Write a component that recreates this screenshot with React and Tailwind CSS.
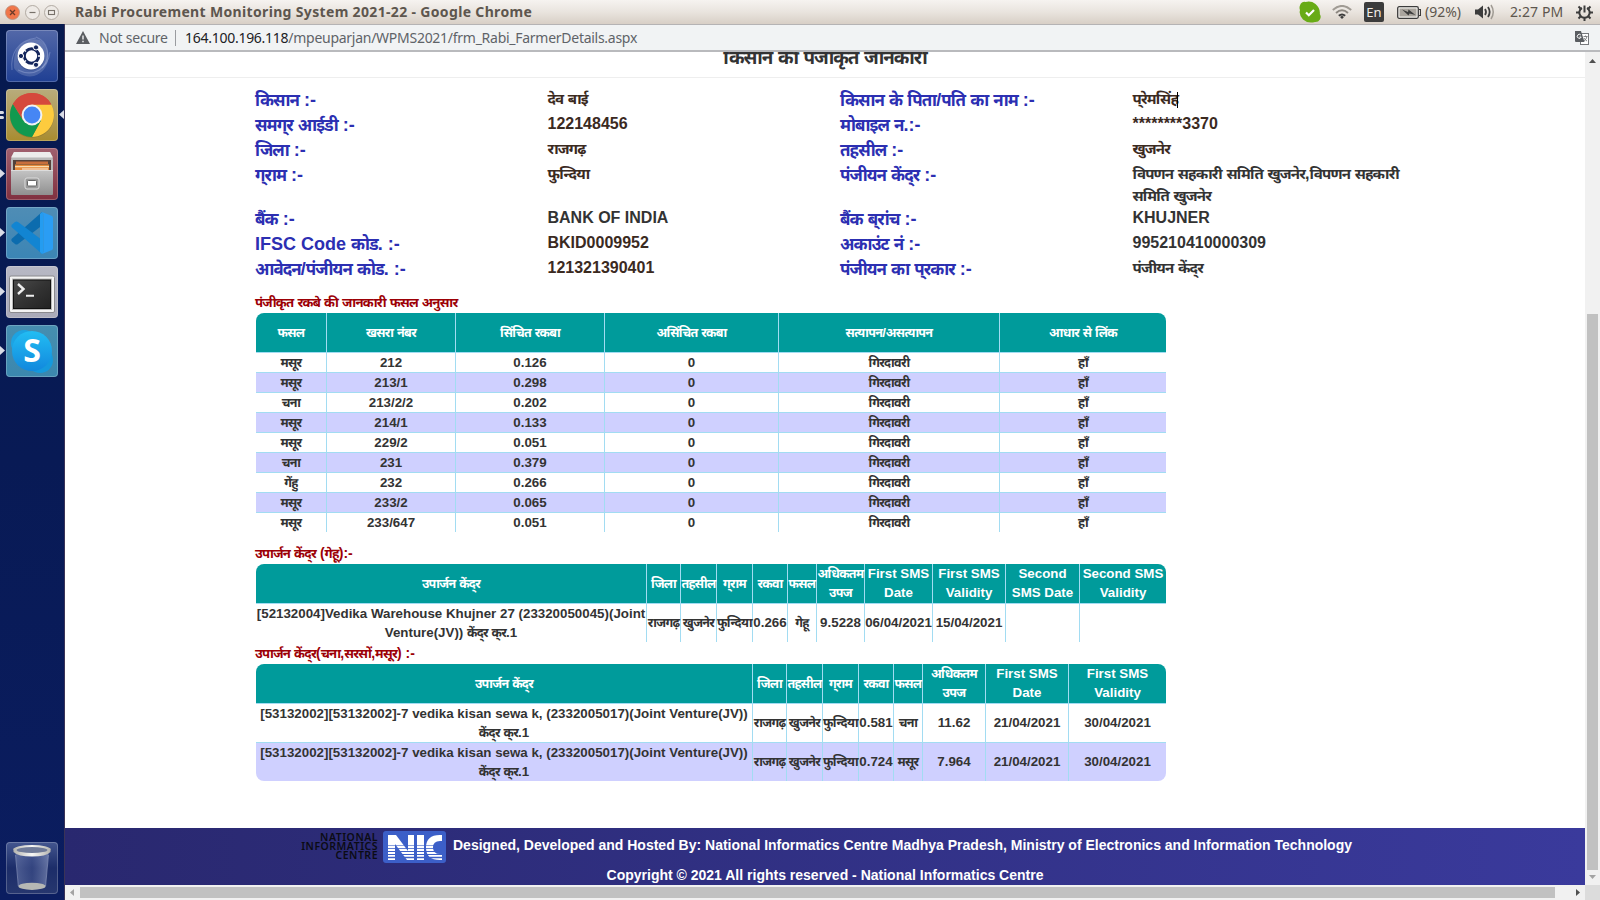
import React from "react";

const FONT = "font-['Liberation_Sans','Noto_Sans_Devanagari',sans-serif]";
const UI = "font-['Noto_Sans','Open_Sans',sans-serif]";

// Sets Devanagari words slightly tighter than the Latin text and keeps the halant of "-ra" clusters visible.
function Mix({ children }) {
  const parts = String(children).split(/([\u0900-\u097F]+)/);
  return parts.map((p, i) =>
    i % 2 ? (
      <span key={i} className="text-[0.94em] leading-[0] tracking-[-0.055em]">{p.replace(/\u094D\u0930/g, "\u094D\u200C\u0930")}</span>
    ) : (
      p
    )
  );
}

function Tile({ className, children, left, right }) {
  return (
    <div className="relative w-full h-[52px] pl-[6px]">
      <div className={"relative w-[52px] h-[52px] rounded-[4px] overflow-hidden shadow-[inset_0_0_0_1px_rgba(255,255,255,0.22)] " + className}>
        {children}
      </div>
      {left === 1 && <Pip />}
      {left === 2 && (
        <div className="absolute left-0 top-[22px] flex flex-col gap-[2px]">
          <i className="w-[4px] h-[3px] bg-[#d9dce6] rounded-r-[2px]" />
          <i className="w-[4px] h-[3px] bg-[#d9dce6] rounded-r-[2px]" />
        </div>
      )}
      {right && (
        <svg className="absolute right-0 top-[21px] w-[5px] h-[9px]" viewBox="0 0 5 9"><path d="M5 0V9L0 4.5Z" fill="#d9dce6" /></svg>
      )}
    </div>
  );
}

function Pip() {
  return <svg className="absolute left-0 top-[21px] w-[5px] h-[9px]" viewBox="0 0 5 9"><path d="M0 0V9L5 4.5Z" fill="#d9dce6" /></svg>;
}

function Dash() {
  return (
    <svg viewBox="0 0 52 52" className="w-full h-full">
      <g fill="none" stroke="#b9c8ef" strokeOpacity=".3" strokeWidth="1.2">
        <path d="M6 40C4 24 12 10 30 8" /><path d="M30 7C42 12 46 26 36 38" /><path d="M44 22C42 38 28 48 12 40" />
      </g>
      <path d="M8 38C6 18 18 6 34 10C46 18 46 40 28 46C18 48 10 42 8 38Z" fill="#fff" opacity=".16" />
      <circle cx="25" cy="27" r="13.6" fill="#0d2560" opacity=".3" />
      <circle cx="25" cy="26" r="13.4" fill="#fff" />
      <circle cx="25.5" cy="26" r="7.2" fill="none" stroke="#14265c" strokeWidth="3" />
      <path d="M20 21.5L17.5 19.5M20 30.5L17.5 32.5M32 26H35" stroke="#fff" strokeWidth="1.4" />
      <g fill="#14265c" stroke="#fff" strokeWidth="1"><circle cx="15" cy="26" r="2.6" /><circle cx="30" cy="17.4" r="2.6" /><circle cx="30" cy="34.8" r="2.6" /></g>
    </svg>
  );
}

function Chrome() {
  return (
    <svg viewBox="0 0 52 52" className="w-full h-full">
      <circle cx="26" cy="26.5" r="22.2" fill="#6b5a20" opacity=".35" />
      <path d="M26 26L6.95 15A22 22 0 0 1 45.05 15Z" fill="#d5493c" />
      <path d="M26 15.5H45.3A22 22 0 0 1 26 48L35.1 31.2Z" fill="#fdcb3e" />
      <path d="M6.95 15A22 22 0 0 0 26 48L35 31.5L17 31.2Z" fill="#11994f" />
      <path d="M6.95 15A22 22 0 0 1 45.3 15.5H26A10.6 10.6 0 0 0 16.5 30Z" fill="#d5493c" />
      <circle cx="26" cy="26" r="10.4" fill="#f2f2f2" />
      <circle cx="26" cy="26" r="8.4" fill="#4686f4" />
    </svg>
  );
}

function Files() {
  return (
    <svg viewBox="0 0 52 52" className="w-full h-full">
      <defs>
        <linearGradient id="fd" x1="0" y1="0" x2="0" y2="1"><stop offset="0" stopColor="#c4c4c4" /><stop offset="1" stopColor="#909090" /></linearGradient>
      </defs>
      <path d="M8 4H44L47 11V45H5V11Z" fill="#b9b9b9" />
      <path d="M8 4H44L47 9.500H5Z" fill="#ececec" />
      <path d="M7 12H45V23H7Z" fill="#54413a" />
      <path d="M10 13.500H42V16H10Z" fill="#c96f3c" />
      <path d="M9 16.500H43V23H9Z" fill="#e58a3b" /><path d="M9 18H43V19.200H9Z" fill="#f9dcae" />
      <path d="M16 20H42V22H16Z" fill="#fff" opacity=".45" />
      <path d="M5 22H47V46Q47 47 46 47H6Q5 47 5 46Z" fill="url(#fd)" />
      <path d="M5 22H47V22.800H5Z" fill="#e4e4e4" />
      <rect x="19" y="30" width="14" height="11" rx="2" fill="#999" stroke="#ddd" strokeWidth="1" />
      <rect x="21.500" y="32.500" width="9" height="5.500" rx="1" fill="#fff" stroke="#666" strokeWidth="1" />
    </svg>
  );
}

function Code() {
  return (
    <svg viewBox="0 0 52 52" className="w-full h-full">
      <path d="M36 5L5.500 32Q5 33.500 6 34.500L9 37Q10.500 38 12 37L36 18.500Z" fill="#0c6cae" />
      <path d="M36 47L5.500 20Q5 18.500 6 17.500L9 15Q10.500 14 12 15L36 33Z" fill="#1285d2" />
      <path d="M36 5L46 9Q47 9.600 47 11V41Q47 42.300 46 43L36 47Q38 45 37.500 42V10Q38 7 36 5Z" fill="#2a9df4" />
      <path d="M36 5L34 7V45L36 47Q38 45 37.500 42V10Q38 7 36 5Z" fill="#249cf0" />
    </svg>
  );
}

function Term() {
  return (
    <svg viewBox="0 0 52 52" className="w-full h-full">
      <defs><linearGradient id="tm" x1="0" y1="0" x2="1" y2="1"><stop offset="0" stopColor="#4a4a4a" /><stop offset=".5" stopColor="#333" /><stop offset="1" stopColor="#222" /></linearGradient></defs>
      <rect x="3.500" y="10" width="45" height="36.500" rx="1.500" fill="#f3f3f3" stroke="#8a8a8e" />
      <rect x="6" y="12.500" width="40" height="31.500" fill="#b9b9b9" />
      <rect x="7.500" y="14" width="37" height="28.500" fill="url(#tm)" stroke="#111" />
      <path d="M12 18L17.500 23L12 28" fill="none" stroke="#eee" strokeWidth="2.400" />
      <path d="M20 29.800H28" stroke="#eee" strokeWidth="2" />
    </svg>
  );
}

function Skype() {
  return (
    <svg viewBox="0 0 52 52" className="w-full h-full">
      <defs><linearGradient id="sk" x1="0" y1="0" x2="0" y2="1"><stop offset="0" stopColor="#22bdf3" /><stop offset="1" stopColor="#1288dd" /></linearGradient></defs>
      <circle cx="18" cy="18" r="13" fill="#1da3e2" /><circle cx="34" cy="35" r="13" fill="#1599dd" />
      <circle cx="26" cy="26" r="20" fill="url(#sk)" />
      <text x="26" y="37" textAnchor="middle" fontSize="32" fontWeight="700" fill="#fff" fontFamily="Open Sans, sans-serif">S</text>
    </svg>
  );
}

function Trash() {
  return (
    <svg viewBox="0 0 52 52" className="w-full h-full">
      <defs>
        <linearGradient id="tr" x1="0" y1="0" x2="1" y2="0"><stop offset="0" stopColor="#8a98c4" stopOpacity=".45" /><stop offset=".5" stopColor="#5b6ca6" stopOpacity=".35" /><stop offset="1" stopColor="#a8b4d6" stopOpacity=".5" /></linearGradient>
        <linearGradient id="rm" x1="0" y1="0" x2="1" y2="0"><stop offset="0" stopColor="#b5b5b0" /><stop offset=".5" stopColor="#f7f7f5" /><stop offset="1" stopColor="#b5b5b0" /></linearGradient>
      </defs>
      <path d="M9.500 11L12.500 44Q26 50 39.500 44L42.500 11Z" fill="url(#tr)" />
      <ellipse cx="26" cy="44.300" rx="13.600" ry="3.600" fill="#b6b8b4" />
      <path d="M9.500 13L12.300 44M42.500 13L39.600 44" stroke="#9aa5c8" strokeWidth=".8" opacity=".7" />
      <path d="M7.500 6.500V10Q12 14.500 26 14.500Q40 14.500 44.500 10V6.500Z" fill="url(#rm)" />
      <ellipse cx="26" cy="7.500" rx="18.500" ry="4.500" fill="url(#rm)" />
      <ellipse cx="26" cy="8" rx="15.500" ry="3" fill="#6f7a98" />
    </svg>
  );
}

function TitleBar() {
  return (
    <header className={"h-[24px] w-full shrink-0 flex items-center bg-linear-to-b from-[#f6f3f0] via-[#e9e4de] to-[#d8cfc6] pl-[5px] pr-[7px] " + UI}>
      <div className="flex gap-[3px] items-center w-[66px]">
        <svg className="w-[15px] h-[15px]" viewBox="0 0 15 15"><circle cx="7.500" cy="7.500" r="7" fill="#f0764a" stroke="#b9917f" strokeWidth=".8" /><path d="M5 5L10 10M10 5L5 10" stroke="#6b3a28" strokeWidth="1.300" /></svg>
        <svg className="w-[15px] h-[15px] ml-[2px]" viewBox="0 0 15 15"><circle cx="7.500" cy="7.500" r="7" fill="#eeeae6" stroke="#aaa39b" strokeWidth=".9" /><path d="M4.500 7.500H10.500" stroke="#77716a" strokeWidth="1.200" /></svg>
        <svg className="w-[15px] h-[15px] ml-[1px]" viewBox="0 0 15 15"><circle cx="7.500" cy="7.500" r="7" fill="#eeeae6" stroke="#aaa39b" strokeWidth=".9" /><rect x="4.500" y="5.500" width="6" height="4" fill="none" stroke="#77716a" strokeWidth="1.100" /></svg>
      </div>
      <div className="pl-[4px] whitespace-nowrap text-[14px] leading-[24px] font-bold text-[#5d564e] tracking-[0.34px]">Rabi Procurement Monitoring System 2021-22 - Google Chrome</div>
      <div className="flex-1" />
      <svg className="w-[22px] h-[22px]" viewBox="0 0 22 22"><path d="M1 4.500A4.500 4.500 0 0 1 6.500 1Q12-.5 16.500 3Q21.500 7.500 20.800 13A5.200 5.200 0 0 1 16 21Q9 23 4 18.500Q-.5 13.500 1 9Q0 6.500 1 4.500Z" fill="#68ab16" /><path d="M7 11.500L9.800 14.200L15 9" fill="none" stroke="#fff" strokeWidth="2.200" /></svg>
      <svg className="w-[20px] h-[14px] ml-[11px]" viewBox="0 0 20 14" fill="none" strokeWidth="1.900"><path d="M.8 5Q10-3.200 19.200 5" stroke="#a09b94" /><path d="M4 8Q10 2.700 16 8" stroke="#8c8780" /><path d="M6.800 10.800Q10 8 13.200 10.800" stroke="#3c3c3c" /><path d="M8 12L10 10.800L12 12L10 14Z" fill="#3c3c3c" /></svg>
      <div className="ml-[12px] w-[20px] h-[20px] rounded-[2px] bg-[#3c3c3c] text-[#f2eee9] text-[13px] leading-[20px] text-center">En</div>
      <svg className="ml-[13px] w-[24px] h-[13px]" viewBox="0 0 24 13"><rect x=".7" y=".7" width="20.600" height="11.600" rx="1.500" fill="#f5f2ee" stroke="#3c3c3c" strokeWidth="1.300" /><rect x="2.500" y="2.500" width="17" height="8" fill="#aaa59e" /><path d="M22 3.500H23.500V9.500H22" fill="none" stroke="#3c3c3c" strokeWidth="1.200" /><path d="M5 3.500L11 6L11.500 3.500L18.500 9L12.500 7.500L11.500 9.500Z" fill="#3c3c3c" /></svg>
      <div className="ml-[4px] w-[38px] text-[14px] leading-[24px] text-[#5d564e] tracking-[0px] whitespace-nowrap">(92%)</div>
      <svg className="ml-[12px] w-[20px] h-[16px]" viewBox="0 0 20 16" fill="none"><path d="M0 5.500H3L8 1.500V14.500L3 10.500H0Z" fill="#3c3c3c" /><path d="M10 5Q12 8 10 11" stroke="#3c3c3c" strokeWidth="1.800" /><path d="M13 3Q16.300 8 13 13" stroke="#3c3c3c" strokeWidth="1.800" /><path d="M16 1Q20.500 8 16 15" stroke="#a09b94" strokeWidth="1.500" /></svg>
      <div className="ml-[15px] w-[54px] text-[14px] leading-[24px] text-[#5d564e] tracking-[0.1px] whitespace-nowrap">2:27 PM</div>
      <svg className="ml-[12px] w-[17px] h-[17px]" viewBox="0 0 17 17" fill="none" stroke="#3c3c3c"><path d="M6 4A5.200 5.200 0 1 0 11 4" strokeWidth="2" /><path d="M8.500 1.500V8.500" strokeWidth="2" /><path d="M0 8.500H3M14 8.500H17M2.500 2.500L4.500 4.500M14.500 2.500L12.500 4.500M2.500 14.500L4.500 12.500M14.500 14.500L12.500 12.500M8.500 14V17" strokeWidth="2" /></svg>
    </header>
  );
}

function AddressBar() {
  return (
    <div className={"h-[28px] shrink-0 flex items-center border-t border-b-2 border-t-[#b5b3b4] border-b-[#b9babd] bg-[#f1f3f4] pl-[11px] pr-[11px] text-[14px] text-[#5f6368] whitespace-nowrap " + UI}>
      <svg className="w-[14px] h-[13px]" viewBox="0 0 14 13"><path d="M7 0L14 13H0Z" fill="#5a5d61" /><path d="M6.300 4.500H7.700V8.500H6.300ZM6.300 9.800H7.700V11.200H6.300Z" fill="#f1f3f4" /></svg>
      <span className="ml-[9px] w-[76px] tracking-[-0.25px]">Not secure</span>
      <i className="w-px h-[16px] bg-[#9a9ca0]" />
      <span className="ml-[9px] tracking-[-0.27px]"><span className="text-[#202124]">164.100.196.118</span>/mpeuparjan/WPMS2021/frm_Rabi_FarmerDetails.aspx</span>
      <i className="flex-1" />
      <svg className="w-[14px] h-[14px]" viewBox="0 0 14 14"><rect x="5.500" y="2.500" width="8" height="11" fill="#fff" stroke="#77797c" /><path d="M0 0H6L9.500 11H1Q0 11 0 10Z" fill="#5a5d61" /><path d="M5.800 4A2 2 0 1 0 6.200 6H4.500" fill="none" stroke="#fff" /><path d="M8.500 5.500H12.500M10.500 4.500V5.500M12 5.500Q11.500 8.500 8.800 10M9 7Q10 9 12 10" fill="none" stroke="#77797c" strokeWidth=".9" /></svg>
    </div>
  );
}

const DETAILS = [
  ["किसान :-", "देव बाई", "किसान के पिता/पति का नाम :-", "प्रेमसिंह"],
  ["समग्र आईडी :-", "122148456", "मोबाइल न.:-", "********3370"],
  ["जिला :-", "राजगढ़", "तहसील :-", "खुजनेर"],
  ["ग्राम :-", "फुन्दिया", "पंजीयन केंद्र :-", "विपणन सहकारी समिति खुजनेर,विपणन सहकारी समिति खुजनेर"],
  ["बैंक :-", "BANK OF INDIA", "बैंक ब्रांच :-", "KHUJNER"],
  ["IFSC Code कोड. :-", "BKID0009952", "अकाउंट नं :-", "995210410000309"],
  ["आवेदन/पंजीयन कोड. :-", "121321390401", "पंजीयन का प्रकार :-", "पंजीयन केंद्र"],
];

function Details() {
  return (
    <div className="ml-[190px] mt-[10px] w-[1170px] grid grid-cols-4 grid-rows-[25px_25px_25px_44px_25px_25px_25px] font-bold">
      {DETAILS.map((row, r) =>
        row.map((t, c) =>
          c % 2 === 0 ? (
            <div key={r + "-" + c} className="text-[18px] leading-[25px] text-[#2c2fb2] whitespace-nowrap"><Mix>{t}</Mix></div>
          ) : (
            <div key={r + "-" + c} className={"text-[16px] leading-[22px] pr-[15px] " + (r < 3 || (r > 4 && c === 1) || (r === 3 && c === 1) ? "text-[#3b2a1f]" : "text-[#333]")}>
              <Mix>{t}</Mix>
              {r === 0 && c === 3 && <i className="inline-block w-px h-[16px] bg-black align-middle -ml-px" />}
            </div>
          )
        )
      )}
    </div>
  );
}

function Table({ cols, head, rows, rowH, tall, rounded }) {
  return (
    <table className={"ml-[191px] w-[910px] table-fixed border-separate border-spacing-0 overflow-hidden rounded-t-[8px] text-center font-bold text-[13.33px] leading-[19px] text-[#333] " + (rounded ? "rounded-b-[8px]" : "")}>
      <colgroup>{cols.map((w, i) => <col key={i} style={{ width: w }} />)}</colgroup>
      <thead>
        <tr className="h-[39px] bg-[#009b9b] text-white">
          {head.map((h, i) => (
            <th key={i} className={"px-0 pt-0 align-middle whitespace-pre " + (h.includes("\n") ? "pb-px " : "pb-0 ") + (i ? "border-l border-[#a2dcf2]" : "")}><Mix>{h}</Mix></th>
          ))}
        </tr>
      </thead>
      <tbody>
        {rows.map((row, r) => (
          <tr key={r} className={rowH + (r % 2 ? " bg-[#cfd0ff]" : " bg-white")}>
            {row.map((c, i) => (
              <td key={i} className={"px-0 pt-0 align-middle whitespace-pre border-t border-[#a2dcf2] " + (i ? "border-l " : "") + (tall && i ? "pb-px" : "pb-0")}><Mix>{c}</Mix></td>
            ))}
          </tr>
        ))}
      </tbody>
    </table>
  );
}

const CROPS = [
  ["मसूर", "212", "0.126"], ["मसूर", "213/1", "0.298"], ["चना", "213/2/2", "0.202"], ["मसूर", "214/1", "0.133"],
  ["मसूर", "229/2", "0.051"], ["चना", "231", "0.379"], ["गेंहु", "232", "0.266"], ["मसूर", "233/2", "0.065"], ["मसूर", "233/647", "0.051"],
].map((r) => [...r, "0", "गिरदावरी", "हाँ"]);

const JV = "[53132002][53132002]-7 vedika kisan sewa k, (2332005017)(Joint Venture(JV))\nकेंद्र क्र.1";

function Caption({ className, children }) {
  return <div className={"ml-[190px] text-[14px] font-bold text-[#9c0006] whitespace-nowrap " + className}><Mix>{children}</Mix></div>;
}

function Footer() {
  return (
    <footer className="mt-auto h-[57px] w-full shrink-0 bg-linear-to-r from-[#29286f] to-[#3a3a9c] text-white font-bold text-[14px] whitespace-nowrap">
      <div className="h-[35px] flex items-start pl-[236px]">
        <div className={"w-[77px] mt-[5px] text-right text-[10.5px] leading-[9px] font-semibold text-[#0b0b14] tracking-[0.5px] " + UI}>
          NATIONAL<br />INFORMATICS<br />CENTRE
        </div>
        <svg className="ml-[5px] mt-[3px] w-[63px] h-[32px]" viewBox="0 0 63 32">
          <rect width="63" height="32" rx="3" fill="#3c5fc8" />
          <path d="M5 4H13L25 20V4H31V29H24L12 13V29H5Z M34 4H41V29H34Z M59 4V10Q50 9 50 16.500Q50 24 59 23V29Q43 30 43 16.500Q43 3 59 4Z" fill="#fff" />
          <g stroke="#3c5fc8"><path d="M5 14.500H59" strokeWidth=".6" /><path d="M5 17.500H59" strokeWidth=".8" /><path d="M5 20.500H59" strokeWidth="1" /><path d="M5 23.500H59" strokeWidth="1.200" /><path d="M5 26.500H59" strokeWidth="1.500" /></g>
        </svg>
        <div className="ml-[7px] leading-[35px]">Designed, Developed and Hosted By: National Informatics Centre Madhya Pradesh, Ministry of Electronics and Information Technology</div>
      </div>
      <div className="w-full text-center leading-[24px]">Copyright © 2021 All rights reserved - National Informatics Centre</div>
    </footer>
  );
}

export default function App() {
  return (
    <div className={"w-[1600px] h-[900px] overflow-hidden flex flex-col bg-white " + FONT}>
      <TitleBar />
      <div className="flex h-[876px]">
        <aside className="w-[65px] shrink-0 flex flex-col gap-[7px] pt-[6px] pb-[6px] border-r border-[#3a3357] bg-linear-to-b from-[#061a4f] via-[#081a55] to-[#0b1d60]">
          <Tile className="bg-linear-to-b from-[#5368a8] to-[#1f3f93]"><Dash /></Tile>
          <Tile left={2} right className="bg-linear-to-b from-[#b8ac7c] to-[#a88c2e]"><Chrome /></Tile>
          <Tile left={1} className="bg-linear-to-b from-[#a0606f] to-[#80303f]"><Files /></Tile>
          <Tile left={1} className="bg-linear-to-b from-[#4f8db5] to-[#3b85b5]"><Code /></Tile>
          <Tile left={1} className="bg-linear-to-b from-[#b7b8c4] to-[#a9aab8]"><Term /></Tile>
          <Tile left={1} className="bg-linear-to-b from-[#468eb0] to-[#3b87ae]"><Skype /></Tile>
          <div className="flex-1" />
          <Tile className="bg-linear-to-b from-[#44568f] via-[#1c2d69] to-[#27376f]"><Trash /></Tile>
        </aside>
        <div className="flex-1 flex flex-col min-w-0">
          <AddressBar />
          <div className="flex h-[833px]">
            <main className="w-[1520px] flex flex-col overflow-hidden text-[#333]">
              <div className="h-[26px] shrink-0 border-b border-[#eee] overflow-hidden flex flex-col items-center">
                <h1 className="-mt-[9px] text-[20px] leading-[28px] font-bold whitespace-nowrap"><Mix>किसान की पंजीकृत जानकारी</Mix></h1>
              </div>
              <Details />
              <Caption className="mt-[10px] h-[21px] leading-[20px]">पंजीकृत रकबे की जानकारी फसल अनुसार</Caption>
              <Table cols={[70, 129, 149, 174, 221, 167]} rowH="h-[20px]" head={["फसल", "खसरा नंबर", "सिंचित रकबा", "असिंचित रकबा", "सत्यापन/असत्यापन", "आधार से लिंक"]} rows={CROPS} />
              <Caption className="mt-[11px] h-[21px] leading-[20px]">उपार्जन केंद्र (गेहू):-</Caption>
              <Table
                tall
                cols={[390, 34, 36, 36, 35, 29, 48, 68, 73, 74, 87]}
                rowH="h-[39px]"
                head={["उपार्जन केंद्र", "जिला", "तहसील", "ग्राम", "रकवा", "फसल", "अधिकतम\nउपज", "First SMS\nDate", "First SMS\nValidity", "Second\nSMS Date", "Second SMS\nValidity"]}
                rows={[["[52132004]Vedika Warehouse Khujner 27 (23320050045)(Joint\nVenture(JV)) केंद्र क्र.1", "राजगढ़", "खुजनेर", "फुन्दिया", "0.266", "गेहू", "9.5228", "06/04/2021", "15/04/2021", "", ""]]}
              />
              <Caption className="h-[22px] leading-[22px]">उपार्जन केंद्र(चना,सरसों,मसूर) :-</Caption>
              <Table
                tall
                rounded
                cols={[496, 34, 36, 36, 35, 29, 63, 83, 98]}
                rowH="h-[39px]"
                head={["उपार्जन केंद्र", "जिला", "तहसील", "ग्राम", "रकवा", "फसल", "अधिकतम\nउपज", "First SMS\nDate", "First SMS\nValidity"]}
                rows={[
                  [JV, "राजगढ़", "खुजनेर", "फुन्दिया", "0.581", "चना", "11.62", "21/04/2021", "30/04/2021"],
                  [JV, "राजगढ़", "खुजनेर", "फुन्दिया", "0.724", "मसूर", "7.964", "21/04/2021", "30/04/2021"],
                ]}
              />
              <Footer />
            </main>
            <div className="w-[15px] flex flex-col items-center bg-[#f1f1f1]">
              <svg className="mt-[7px] w-[7px] h-[4px]" viewBox="0 0 7 4"><path d="M0 4H7L3.500 0Z" fill="#505050" /></svg>
              <div className="mt-[251px] w-[11px] h-[556px] bg-[#c1c1c1]" />
              <svg className="mt-[5px] w-[7px] h-[4px]" viewBox="0 0 7 4"><path d="M0 0H7L3.500 4Z" fill="#a3a3a3" /></svg>
            </div>
          </div>
          <div className="h-[15px] flex items-center bg-[#f1f1f1]">
            <svg className="ml-[5px] w-[4px] h-[7px]" viewBox="0 0 4 7"><path d="M4 0V7L0 3.500Z" fill="#a3a3a3" /></svg>
            <div className="ml-[6px] w-[1475px] h-[11px] bg-[#c1c1c1]" />
            <svg className="ml-[21px] w-[4px] h-[7px]" viewBox="0 0 4 7"><path d="M0 0V7L4 3.500Z" fill="#505050" /></svg>
            <div className="ml-auto w-[15px] h-[15px] bg-[#dcdcdc]" />
          </div>
        </div>
      </div>
    </div>
  );
}
